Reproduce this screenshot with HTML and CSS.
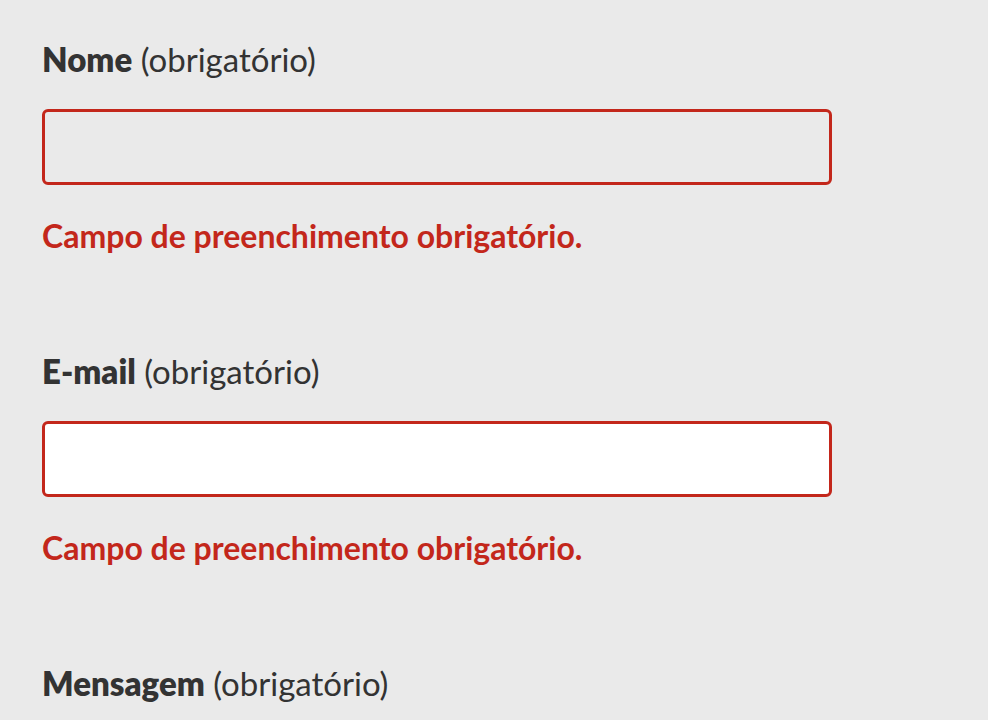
FILE: index.html
```html
<!DOCTYPE html>
<html lang="pt">
<head>
<meta charset="utf-8">
<link rel="stylesheet" href="styles.css">
</head>
<body>
<form class="form">
  <div class="field">
    <label class="label"><strong>Nome</strong> (obrigatório)</label>
    <div class="input input-empty"></div>
    <p class="error">Campo de preenchimento obrigatório.</p>
  </div>
  <div class="field">
    <label class="label"><strong>E-mail</strong> (obrigatório)</label>
    <div class="input input-white"></div>
    <p class="error">Campo de preenchimento obrigatório.</p>
  </div>
  <div class="field">
    <label class="label"><strong>Mensagem</strong> (obrigatório)</label>
  </div>
</form>
</body>
</html>
```
FILE: styles.css
```css
html, body {
  margin: 0;
  padding: 0;
  background: #eaeaea;
}
body {
  font-family: Lato, "Open Sans", sans-serif;
  color: #333333;
  overflow: hidden;
  height: 720px;
}
.form {
  padding: 39px 0 0 42px;
  width: 790px;
}
.field {
  display: flex;
  flex-direction: column;
  margin-bottom: 95px;
}
.field:last-child {
  margin-bottom: 0;
}
.label {
  font-size: 33px;
  line-height: 40px;
  height: 40px;
}
.label strong {
  font-weight: 800;
}
.input {
  margin-top: 30px;
  height: 76px;
  box-sizing: border-box;
  border: 3px solid #c3271b;
  border-radius: 6px;
}
.input-empty { background: transparent; }
.input-white { background: #ffffff; }
.error {
  margin: 31px 0 0;
  font-size: 32px;
  line-height: 40px;
  height: 40px;
  font-weight: 700;
  color: #c3271b;
}
```
